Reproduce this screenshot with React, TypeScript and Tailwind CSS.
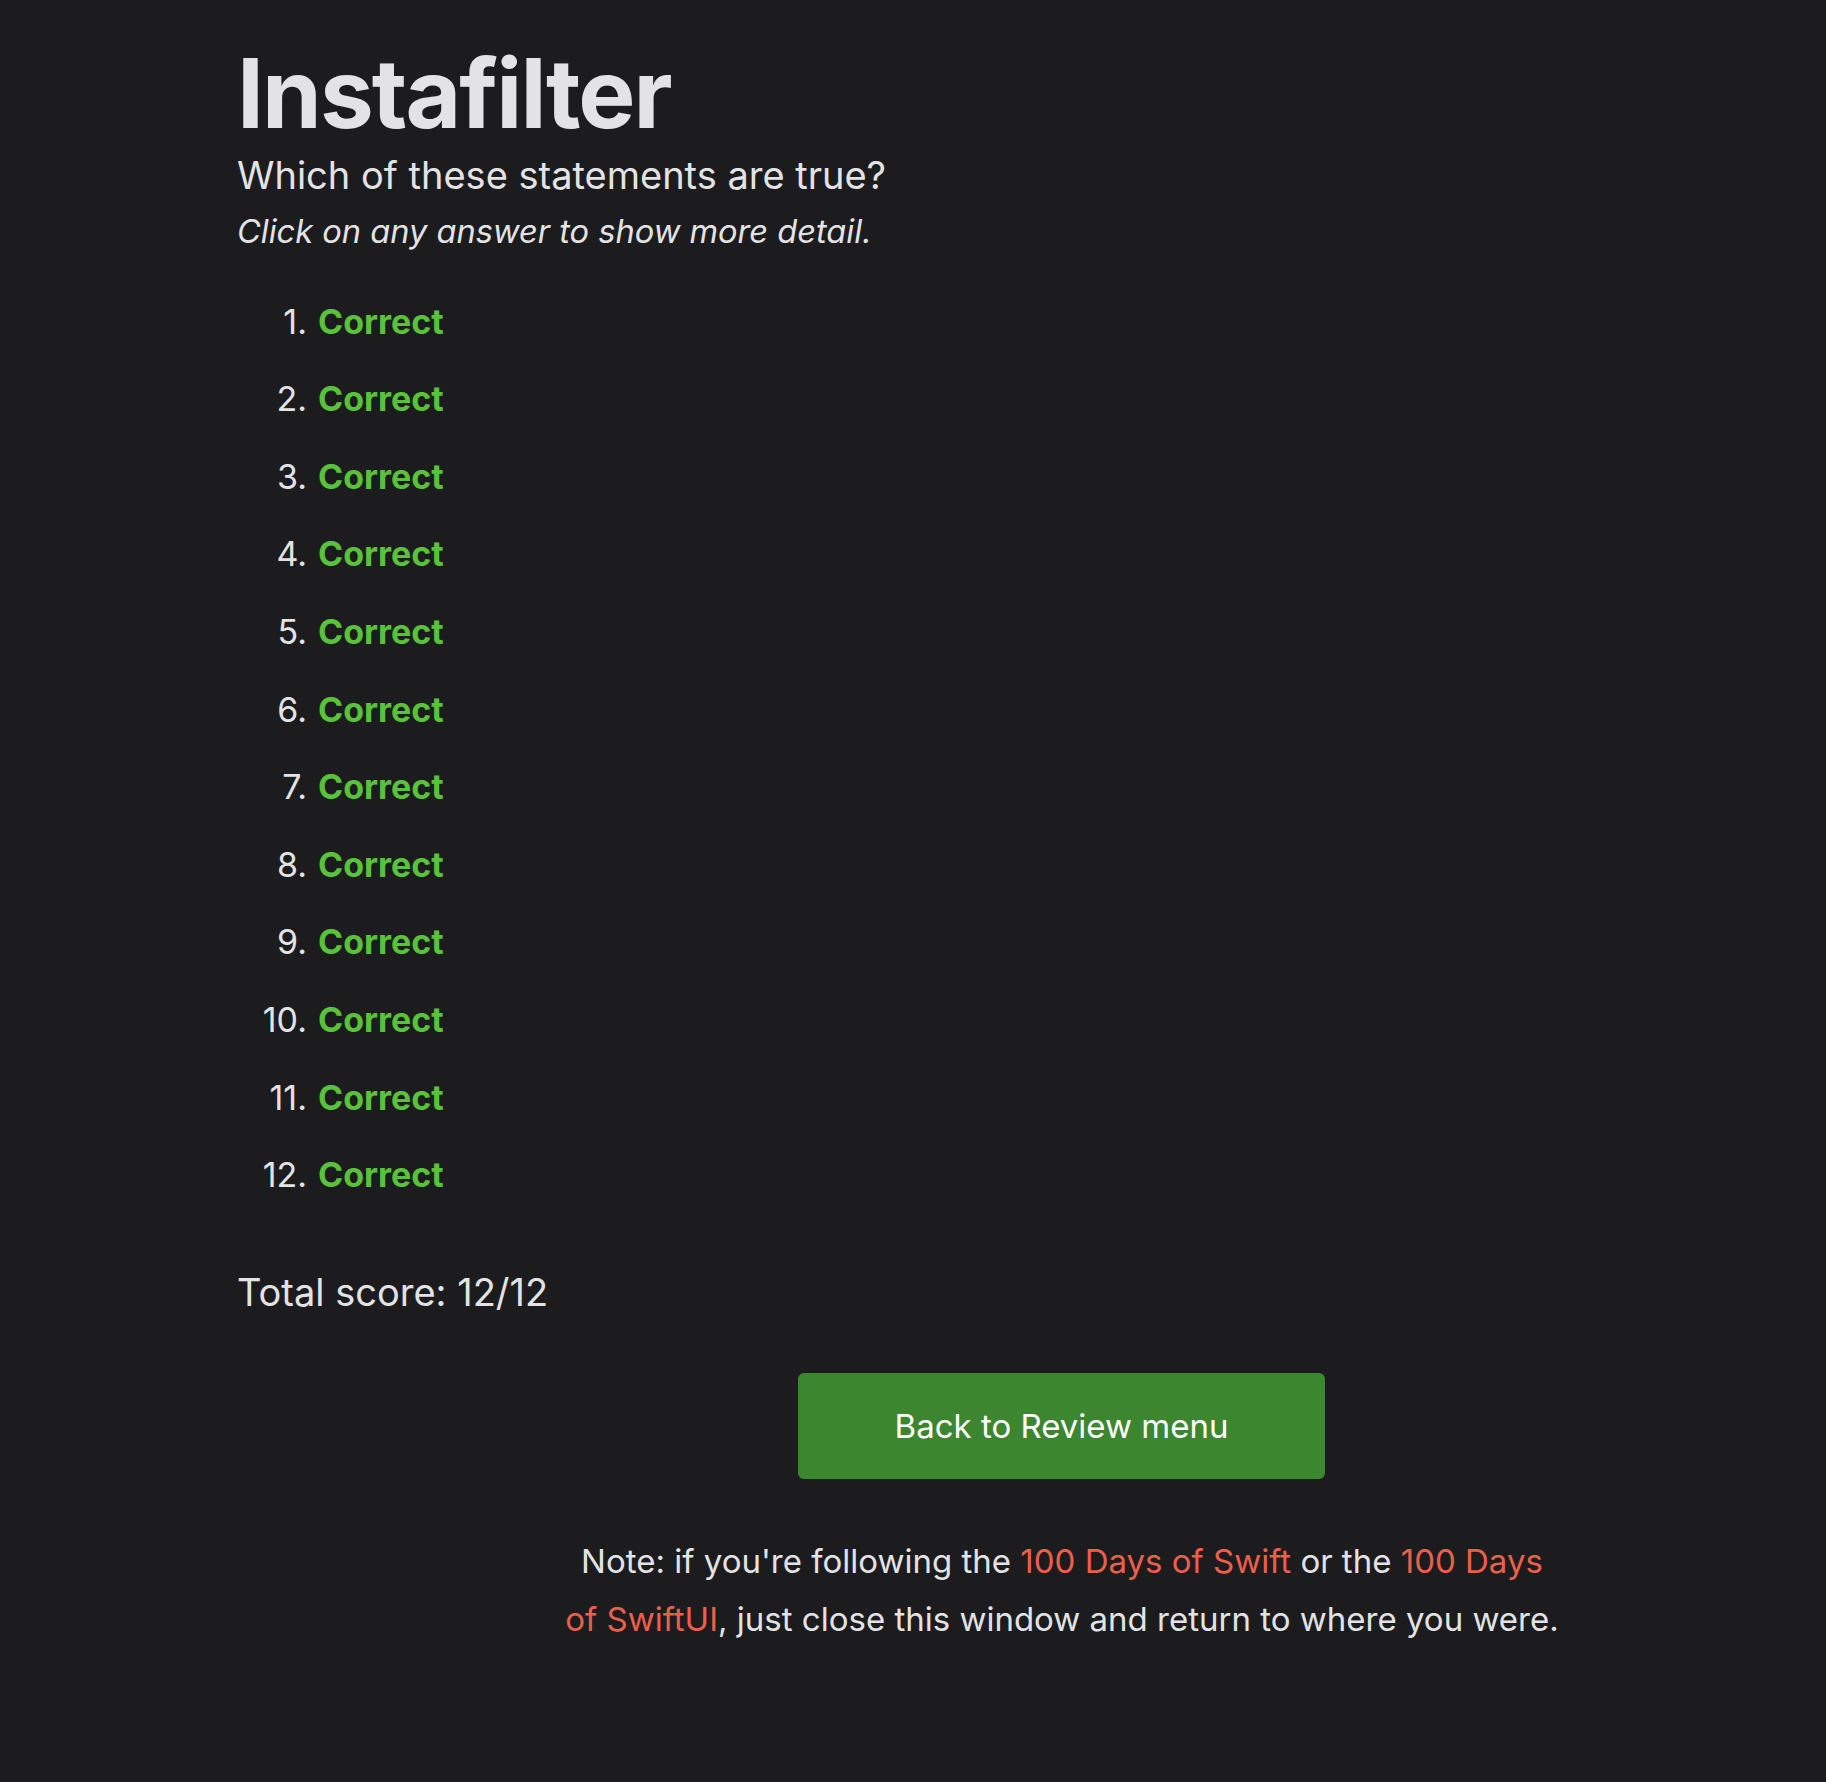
import React from 'react';

const items = Array.from({ length: 12 }, (_, i) => i + 1);

const App: React.FC = () => {
  return (
    <div className="min-h-screen bg-[#1c1c1e] text-[#e3e3e5]" style={{ fontFamily: 'Inter, "Noto Sans", sans-serif' }}>
      <div className="mx-auto w-[1352px] pt-[45px] pb-[150px]">
        <h1 className="text-[96px] font-bold leading-none tracking-[-0.02em]">Instafilter</h1>
        <p className="mt-[12px] text-[38px] leading-[1.2]">Which of these statements are true?</p>
        <p className="mt-[13px] text-[32.6px] italic leading-[1.2]">Click on any answer to show more detail.</p>

        <ol className="mt-[32px]">
          {items.map((n) => (
            <li key={n} className="flex text-[34px] leading-[77.6px]">
              <span className="w-[70px] text-right">{n}.</span>
              <span className="ml-[11px] font-bold text-[#5ac13a]">Correct</span>
            </li>
          ))}
        </ol>

        <p className="mt-[56px] text-[38px] leading-[1.2]">Total score: 12/12</p>

        <div className="mt-[58px] pl-[561px]">
          <button className="flex h-[106px] w-[527px] items-center justify-center rounded-md bg-[#3c8630] text-[33px] text-white">
            Back to Review menu
          </button>
        </div>

        <p className="mt-[53px] ml-[325px] w-[1000px] text-center text-[33px] leading-[58px]">
          Note: if you're following the <a href="#" className="text-[#ec5f4b]">100 Days of Swift</a> or the{' '}
          <a href="#" className="text-[#ec5f4b]">100 Days of SwiftUI</a>, just close this window and return to where you were.
        </p>
      </div>
    </div>
  );
};

export default App;
